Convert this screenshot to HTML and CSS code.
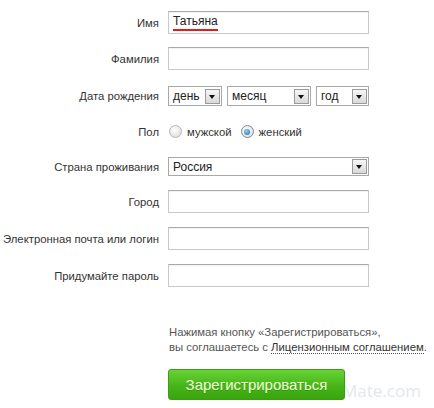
FILE: index.html
```html
<!DOCTYPE html>
<html lang="ru">
<head>
<meta charset="utf-8">
<link rel="stylesheet" href="styles.css">
</head>
<body>
<form class="form">
  <div class="row r-name">
    <div class="label">Имя</div>
    <div class="input"><span class="spell">Татьяна</span></div>
  </div>
  <div class="row r-surname">
    <div class="label">Фамилия</div>
    <div class="input"></div>
  </div>
  <div class="row r-date">
    <div class="label">Дата рождения</div>
    <div class="selects">
      <div class="select s-day"><span class="stext">день</span><span class="arrow"></span></div>
      <div class="select s-month"><span class="stext">месяц</span><span class="arrow"></span></div>
      <div class="select s-year"><span class="stext">год</span><span class="arrow"></span></div>
    </div>
  </div>
  <div class="row r-sex">
    <div class="label">Пол</div>
    <div class="radios">
      <span class="radio"></span><span class="rlabel">мужской</span>
      <span class="radio checked"></span><span class="rlabel">женский</span>
    </div>
  </div>
  <div class="row r-country">
    <div class="label">Страна проживания</div>
    <div class="select s-country"><span class="stext">Россия</span><span class="arrow"></span></div>
  </div>
  <div class="row r-city">
    <div class="label">Город</div>
    <div class="input"></div>
  </div>
  <div class="row r-email">
    <div class="label">Электронная почта или логин</div>
    <div class="input"></div>
  </div>
  <div class="row r-pass">
    <div class="label">Придумайте пароль</div>
    <div class="input"></div>
  </div>
  <div class="agree">
    <p>Нажимая кнопку «Зарегистрироваться»,</p>
    <p>вы соглашаетесь с <span class="link">Лицензионным соглашением</span>.</p>
  </div>
  <div class="submit-wrap">
    <span class="watermark">Mate.com</span>
    <div class="btn">Зарегистрироваться</div>
  </div>
</form>
</body>
</html>
```
FILE: styles.css
```css
html, body {
  margin: 0;
  padding: 0;
  background: #fff;
}
body {
  font-family: "Liberation Sans", Arial, sans-serif;
  font-size: 11.3px;
  color: #333;
  width: 434px;
  height: 408px;
  overflow: hidden;
}
.form {
  padding-top: 11px;
}
.row {
  display: grid;
  grid-template-columns: 160px auto;
  column-gap: 8px;
  align-items: center;
}
.label {
  text-align: right;
  padding-right: 1px;
  color: #333;
  white-space: nowrap;
}
.input {
  width: 199px;
  height: 21px;
  border: 1px solid #c9c9c9;
  border-top-color: #a9a9a9;
  background: #fff;
  box-shadow: inset 0 1px 1px rgba(0,0,0,0.06);
  font-size: 12px;
  line-height: 21px;
  box-sizing: content-box;
}
.spell {
  margin-left: 4px;
  color: #222;
  display: inline-block;
  line-height: 15px;
  border-bottom: 2px solid #e21b1b;
  vertical-align: top;
  margin-top: 2px;
}
.r-surname { margin-top: 13px; }
.r-date { margin-top: 16px; }
.r-sex { margin-top: 17px; height: 17px; }
.r-country { margin-top: 17px; }
.r-city { margin-top: 14px; }
.r-email { margin-top: 14px; }
.r-pass { margin-top: 14px; }

.selects {
  display: flex;
  gap: 5px;
}
.select {
  height: 18px;
  border: 1px solid #a8a8a8;
  background: #fff;
  display: flex;
  align-items: center;
  justify-content: space-between;
  box-sizing: content-box;
  font-size: 12px;
  color: #222;
}
.stext {
  padding-left: 4px;
  line-height: 18px;
}
.s-day { width: 52px; }
.s-month { width: 82px; }
.s-year { width: 51px; }
.s-country { width: 199px; height: 17px; }
.arrow {
  width: 13px;
  height: 13px;
  margin-right: 1px;
  border: 1px solid #9a9a9a;
  background: linear-gradient(#f6f6f6, #d9d9d9);
  position: relative;
}
.arrow::after {
  content: "";
  position: absolute;
  left: 3px;
  top: 5px;
  border-left: 3.5px solid transparent;
  border-right: 3.5px solid transparent;
  border-top: 4px solid #111;
}
.radios {
  display: flex;
  align-items: center;
  color: #333;
}
.radio {
  width: 11px;
  height: 11px;
  border-radius: 50%;
  border: 1px solid #b5b5b5;
  background: radial-gradient(circle at 40% 35%, #fff, #d6d6d6);
  margin-left: 1px;
  margin-right: 5px;
  position: relative;
}
.radio.checked {
  border-color: #7c8a96;
  margin-left: 9px;
}
.radio.checked::after {
  content: "";
  position: absolute;
  left: 2.5px;
  top: 2.5px;
  width: 6px;
  height: 6px;
  border-radius: 50%;
  background: radial-gradient(circle at 40% 35%, #8fd0f5, #1d6aa8);
}
.agree {
  margin-top: 38px;
  margin-left: 169px;
  color: #555;
  line-height: 15px;
  white-space: nowrap;
}
.agree p {
  margin: 0;
}
.link {
  color: #333;
  border-bottom: 1px dotted #555;
}
.submit-wrap {
  margin-top: 14px;
  margin-left: 168px;
  position: relative;
  height: 32px;
}
.btn {
  width: 177px;
  height: 31px;
  border-radius: 3px;
  background: linear-gradient(#67d334, #47b51a 55%, #3aa40e);
  border: 1px solid #3a9e12;
  box-sizing: border-box;
  color: #f2ffd8;
  font-size: 15px;
  line-height: 29px;
  text-align: center;
  text-shadow: 0 1px 0 rgba(0,80,0,0.25);
  position: relative;
}
.watermark {
  position: absolute;
  left: 174px;
  top: 13px;
  font-family: "Open Sans", "Liberation Sans", sans-serif;
  font-size: 17px;
  line-height: 18px;
  color: #e3e8ec;
  white-space: nowrap;
}
```
